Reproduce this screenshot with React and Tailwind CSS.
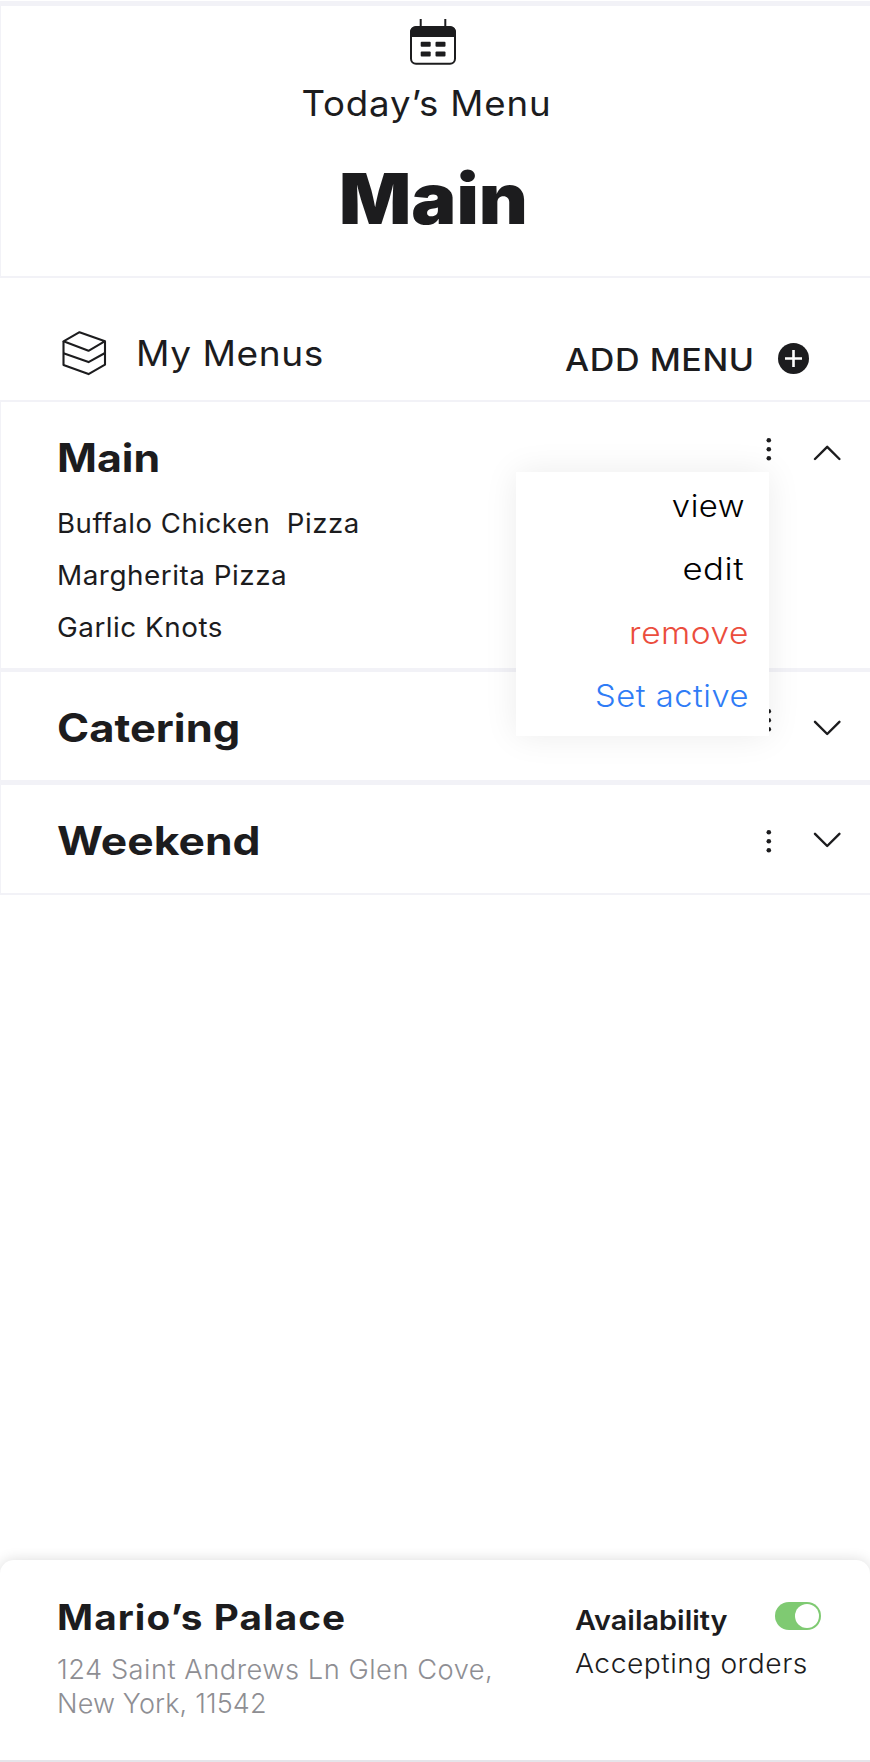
import React from "react";

function CalendarIcon() {
  return (
    <svg width="46" height="46" viewBox="0 0 46 46" fill="none">
      <path d="M10.7 0v8M35.3 0v8" stroke="#1c1c1e" strokeWidth="2" />
      <rect x="1" y="8.3" width="44" height="36.4" rx="5" stroke="#1c1c1e" strokeWidth="2" />
      <path d="M0 18v-5a6 6 0 0 1 6-6h34a6 6 0 0 1 6 6v5z" fill="#1c1c1e" />
      <g fill="#1c1c1e">
        <rect x="10.7" y="22.7" width="10" height="5" rx="1" />
        <rect x="25.5" y="22.7" width="10" height="5" rx="1" />
        <rect x="10.7" y="32.5" width="10" height="5" rx="1" />
        <rect x="25.5" y="32.5" width="10" height="5" rx="1" />
      </g>
    </svg>
  );
}

function StackIcon() {
  return (
    <svg width="46" height="46" viewBox="0 0 46 46" fill="none" stroke="#1c1c1e" strokeWidth="2.1" strokeLinejoin="round">
      <path d="M2.5 11.3 18.5 2.2l25.5 9L27.5 20.8z" />
      <path d="M2.5 11.3v23.8l25 9L44 34.7V11.3" />
      <path d="M2.5 23.2l25 8.9L44 23" />
    </svg>
  );
}

function Dots() {
  return (
    <svg width="6" height="24" viewBox="0 0 6 24" fill="#1c1c1e">
      <circle cx="2.8" cy="3.2" r="2.3" />
      <circle cx="2.8" cy="12.2" r="2.3" />
      <circle cx="2.8" cy="21.2" r="2.3" />
    </svg>
  );
}

function Chevron({ up }) {
  return (
    <svg width="28" height="16" viewBox="0 0 28 16" fill="none" stroke="#1c1c1e" strokeWidth="2.4" strokeLinecap="round" strokeLinejoin="round">
      <path d={up ? "M2 14 14.2 1.8 26.4 14" : "M2 1.8 14.2 14 26.4 1.8"} />
    </svg>
  );
}

export default function App() {
  return (
    <div className="flex h-[1762px] w-[870px] flex-col overflow-hidden bg-white pt-px font-['Inter',sans-serif] text-[#1c1c1e]">
      <header className="flex h-[277px] shrink-0 flex-col items-center border-t-[5px] border-b-2 border-l border-[#f2f2f7]">
        <div className="mt-[13px] ml-[-5px]">
          <CalendarIcon />
        </div>
        <p className="mt-[17px] mr-[18px] h-[42px] scale-x-[1.047] text-[35px] leading-[42px] tracking-[0.8px]">Today’s Menu</p>
        <h1 className="mt-[33px] mr-[4px] h-[84px] scale-x-[1.08] text-[70px] leading-[84px] font-black">Main</h1>
      </header>

      <div className="flex h-[122px] shrink-0 pt-[52px] pl-[61px]">
        <StackIcon />
        <h2 className="mt-px ml-[29px] h-[44px] w-[429px]">
          <span className="inline-block origin-left scale-x-[1.06] text-[35px] leading-[44px] tracking-[0.5px]">My Menus</span>
        </h2>
        <button className="mt-[9px] flex h-[40px] items-center">
          <span className="w-[213px] text-left">
            <span className="inline-block origin-left scale-x-[1.1] pt-px text-[31px] leading-[40px] font-medium tracking-[0.5px]">ADD MENU</span>
          </span>
          <svg width="31" height="31" viewBox="0 0 31 31" className="-mt-px">
            <circle cx="15.5" cy="15.5" r="15.5" fill="#1c1c1e" />
            <path d="M15.5 7v17M7 15.5h17" stroke="#fff" strokeWidth="2.6" />
          </svg>
        </button>
      </div>

      <section className="relative flex h-[272px] shrink-0 justify-between border-t-2 border-b-4 border-l border-[#f2f2f7] pl-[56px]">
        <div className="pt-[31px]">
          <h3 className="h-[50px] origin-left scale-x-[1.1] text-[39px] leading-[50px] font-bold">Main</h3>
          <ul className="mt-[15px] flex flex-col items-start text-[27px] leading-[52px] tracking-[0.5px] whitespace-pre">
            <li className="origin-left scale-x-[1.022]">{"Buffalo Chicken  Pizza"}</li>
            <li className="origin-left scale-x-[1.032]">Margherita Pizza</li>
            <li className="origin-left scale-x-[1.03]">Garlic Knots</li>
          </ul>
        </div>
        <div className="flex items-start gap-[41px] pt-[35px] pr-[29px]">
          <Dots />
          <div className="pt-[8px]">
            <Chevron up />
          </div>
        </div>
        <div className="absolute top-[70px] left-[515px] z-10 flex h-[264px] w-[253px] flex-col items-end bg-white pt-[2px] pr-[20px] text-[31px] leading-[63px] font-light tracking-[0.5px] text-black shadow-[0_0_32px_rgba(0,0,0,0.08)]">
          <span className="mr-[4px] origin-right scale-x-[1.06]">view</span>
          <span className="mr-[5px] origin-right scale-x-[1.12]">edit</span>
          <span className="mt-px origin-right scale-x-[1.08] text-[#eb4d3d]">remove</span>
          <span className="origin-right scale-x-[1.055] text-[#2f7cf6]">Set active</span>
        </div>
      </section>

      <section className="flex h-[113px] shrink-0 justify-between border-b-[5px] border-l border-[#f2f2f7] pl-[56px]">
        <h3 className="origin-left scale-x-[1.115] pt-[31px] text-[39px] leading-[50px] font-bold">Catering</h3>
        <div className="flex items-start gap-[41px] pt-[36px] pr-[29px]">
          <Dots />
          <div className="pt-[12px]">
            <Chevron />
          </div>
        </div>
      </section>

      <section className="flex h-[110px] shrink-0 justify-between border-b-2 border-l border-[#f2f2f7] pl-[56px]">
        <h3 className="origin-left scale-x-[1.138] pt-[31px] text-[39px] leading-[50px] font-bold">Weekend</h3>
        <div className="flex items-start gap-[41px] pt-[44px] pr-[29px]">
          <Dots />
          <div className="pt-[3px]">
            <Chevron />
          </div>
        </div>
      </section>

      <footer className="mt-auto flex h-[202px] shrink-0 rounded-t-[14px] border-b-2 border-[#e5e5ea] bg-white pl-[57px] shadow-[0_0_14px_rgba(0,0,0,0.14)]">
        <div className="flex w-[518px] flex-col items-start pt-[34px]">
          <h2 className="origin-left scale-x-[1.105] text-[35px] leading-[46px] font-bold tracking-[1px]">Mario’s Palace</h2>
          <p className="mt-[13px] flex flex-col items-start text-[27px] leading-[34px] font-light text-[#8e8e93]">
            <span className="origin-left scale-x-[1.01] tracking-[0.5px]">124 Saint Andrews Ln Glen Cove,</span>
            <span className="tracking-[0.15px]">New York, 11542</span>
          </p>
        </div>
        <div className="pt-[41px]">
          <div className="flex">
            <span className="w-[200px]">
              <span className="inline-block origin-left scale-x-[1.07] text-[27px] leading-[40px] font-semibold">Availability</span>
            </span>
            <span className="mt-[1px] flex h-[28px] w-[46px] items-center justify-end rounded-full bg-[#7fca72] pr-[2px]">
              <span className="h-[24px] w-[24px] rounded-full bg-white"></span>
            </span>
          </div>
          <p className="mt-[3px] w-max origin-left scale-x-[1.044] text-[27px] leading-[40px] font-light tracking-[0.5px]">Accepting orders</p>
        </div>
      </footer>
    </div>
  );
}
